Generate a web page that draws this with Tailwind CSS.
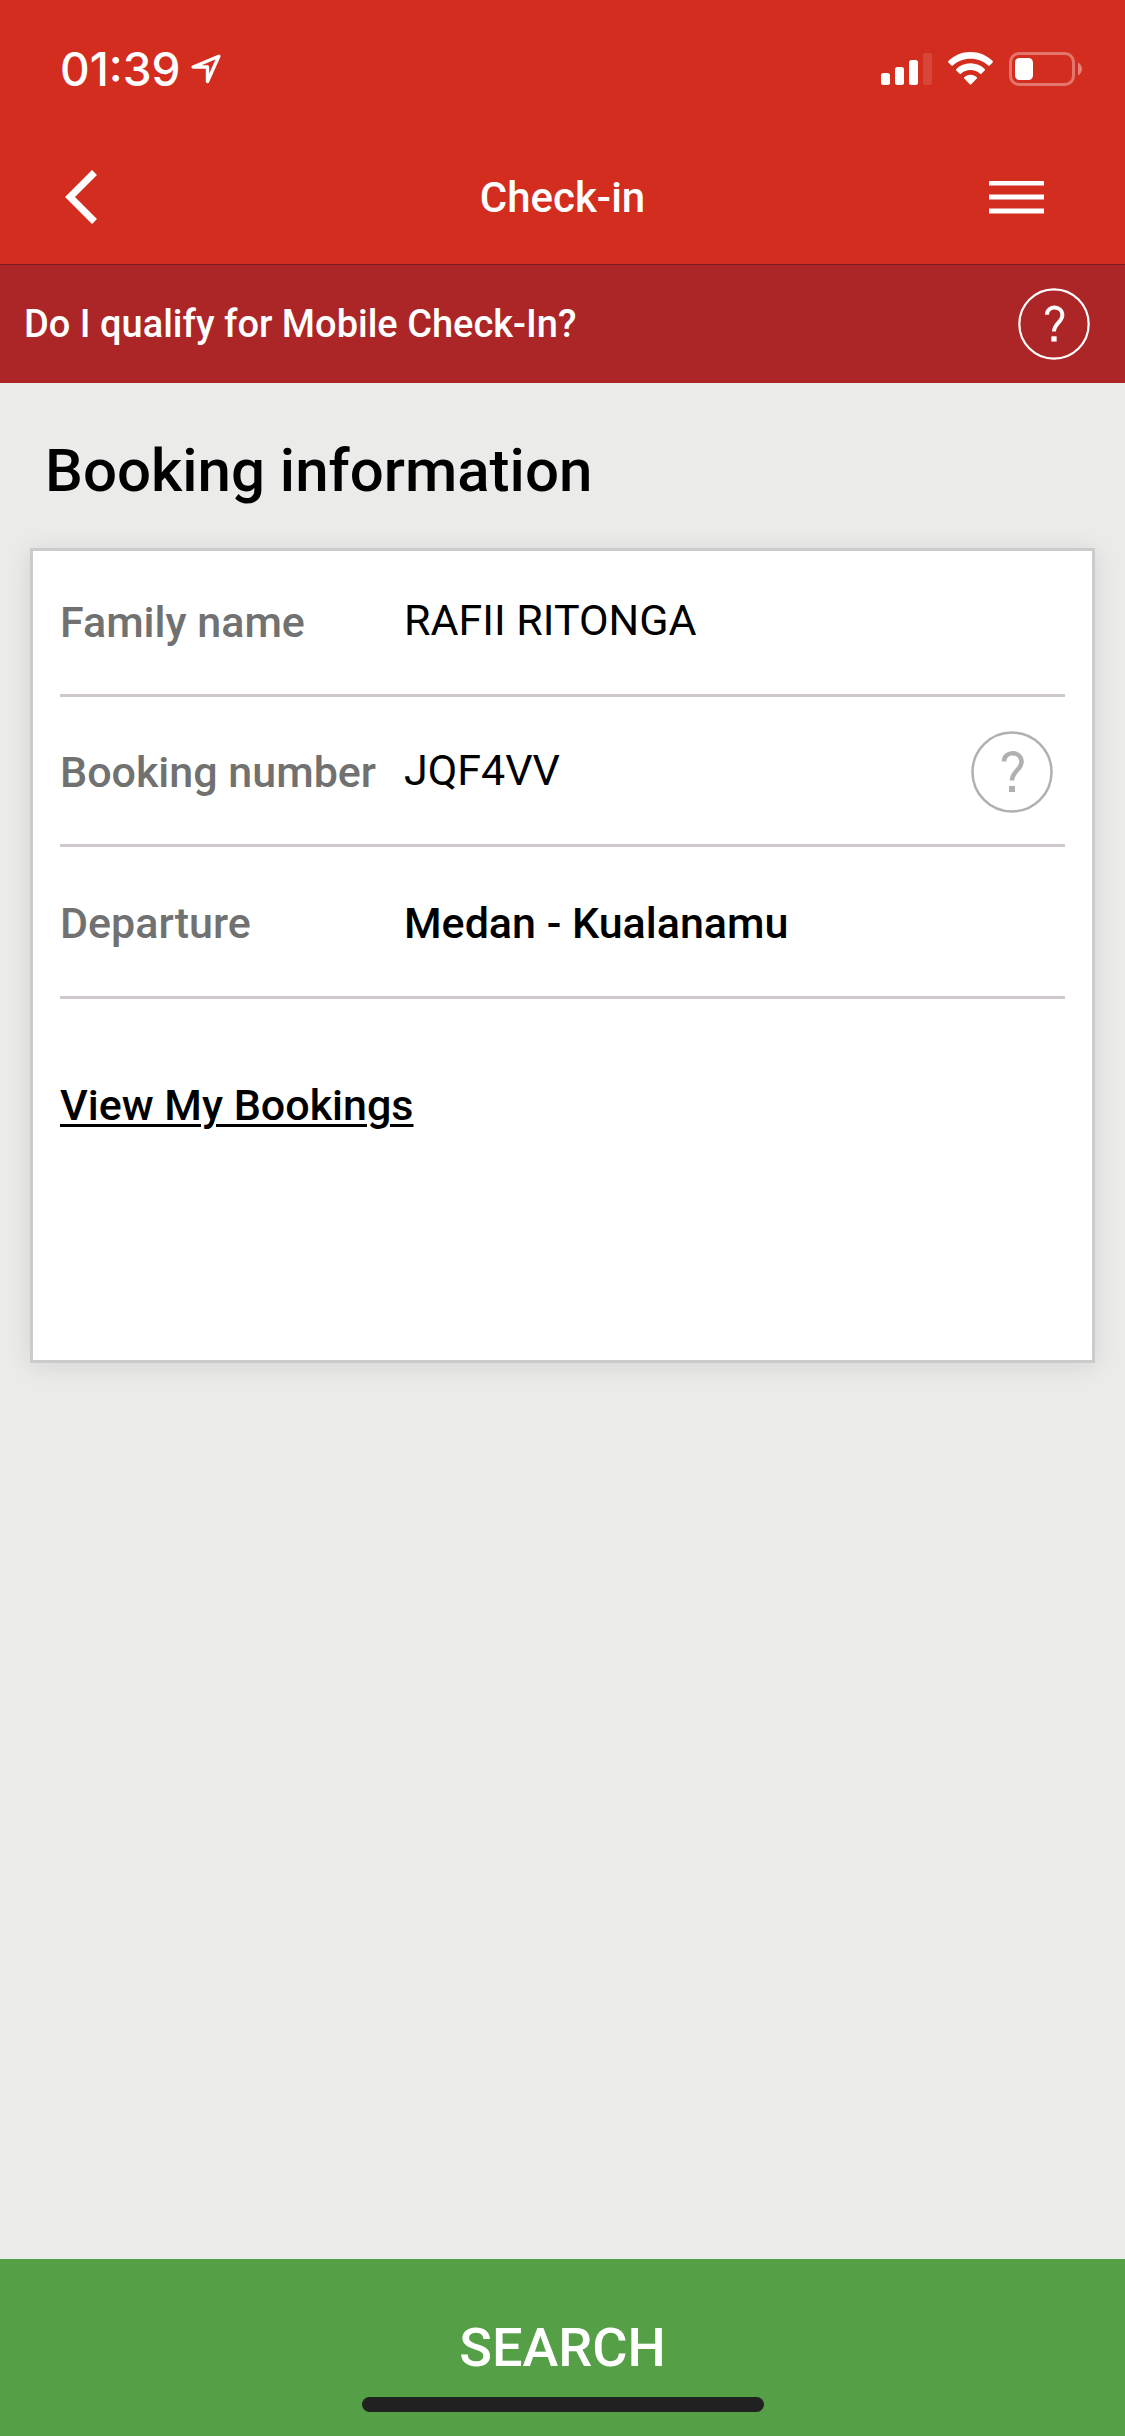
<!DOCTYPE html>
<html lang="en">
<head>
    <meta charset="UTF-8">
    <meta name="viewport" content="width=device-width, initial-scale=1.0">
    <title>Check-in</title>
    <script src="https://cdn.jsdelivr.net/npm/@tailwindcss/browser@4"></script>
</head>
<body class="min-h-screen flex flex-col bg-[#ebebe9] text-black font-['Roboto',sans-serif]">
    <header class="bg-[#d32d1f] text-white">
        <!-- Status bar -->
        <div class="h-[132px] pt-[6px] pl-[60px] pr-[42px] flex items-center justify-between">
            <div class="flex items-center gap-[10px]">
                <span class="font-['Inter',sans-serif] font-medium text-[46px] leading-none">01:39</span>
                <svg class="w-[30px] h-[30px]" viewBox="0 0 30 30" fill="none" stroke="currentColor" stroke-width="3.400" stroke-linejoin="round">
                    <path d="M27.800 2.300 L2.200 13 H16.500 V27.600 Z"/>
                </svg>
            </div>
            <div class="flex items-center gap-4">
                <svg class="w-[51px] h-[34px]" viewBox="0 0 51 34" fill="currentColor">
                    <rect x="0" y="21" width="9" height="12" rx="2.500"/>
                    <rect x="14" y="15" width="9" height="18" rx="2.500"/>
                    <rect x="28" y="8" width="9" height="25" rx="2.500"/>
                    <rect x="42" y="1" width="9" height="32" rx="2.500" opacity=".12"/>
                </svg>
                <svg class="w-[45px] h-[34px]" viewBox="0 0 45 34" fill="currentColor">
                    <path d="M22.500 0 C31 0 39 3.300 44.600 9 Q45.300 9.800 44.600 10.500 L41.600 13.500 Q40.900 14.200 40.200 13.500 C35.500 9.200 29.200 6.800 22.500 6.800 C15.800 6.800 9.500 9.200 4.800 13.500 Q4.100 14.200 3.400 13.500 L.4 10.500 Q-.3 9.800 .4 9 C6 3.300 14 0 22.500 0Z"/>
                    <path d="M22.500 11.200 C28 11.200 33 13.300 36.700 17 Q37.400 17.700 36.700 18.400 L33.400 21.700 Q32.700 22.400 32 21.700 C29.400 19.400 26.100 18.100 22.500 18.100 C18.900 18.100 15.600 19.400 13 21.700 Q12.300 22.400 11.600 21.700 L8.300 18.400 Q7.600 17.700 8.300 17 C12 13.300 17 11.200 22.500 11.200Z"/>
                    <path d="M22.500 22.800 C25 22.800 27.200 23.700 28.800 25.200 Q29.500 25.900 28.800 26.600 L23.200 32.300 Q22.500 33 21.800 32.300 L16.200 26.600 Q15.500 25.900 16.200 25.200 C17.800 23.700 20 22.800 22.500 22.800Z"/>
                </svg>
                <svg class="w-[74px] h-[34px]" viewBox="0 0 74 34" fill="currentColor">
                    <rect x="1.500" y="1.500" width="63" height="31" rx="8.500" fill="none" stroke="currentColor" stroke-width="3" opacity=".35"/>
                    <rect x="6" y="6" width="18" height="22" rx="4.500"/>
                    <path d="M69 10.500 C71.500 12 73 14.300 73 17 S71.500 22 69 23.500Z" opacity=".4"/>
                </svg>
            </div>
        </div>

        <nav class="h-[132px] px-[62px] grid grid-cols-[1fr_auto_1fr] items-center">
            <button type="button" aria-label="Back" class="justify-self-start">
                <svg class="block w-[40px] h-[56px]" viewBox="0 0 40 56" fill="none" stroke="currentColor" stroke-width="7">
                    <path d="M32.500 2.500 L8 27 L32.500 51.500"/>
                </svg>
            </button>
            <h1 class="text-[42px] leading-none font-medium">Check-in</h1>
            <button type="button" aria-label="Menu" class="justify-self-end pr-[19px]">
                <svg class="block w-[56px] h-[34px]" viewBox="0 0 56 34" stroke="currentColor" stroke-width="5">
                    <path d="M1 2 H56 M1 16 H56 M1 30 H56"/>
                </svg>
            </button>
        </nav>

        <div class="h-[119px] border-t border-[#7c191b] bg-[#ac2627] pl-6 pr-[35px] flex items-center justify-between">
            <p class="text-[38px] leading-none font-medium">Do I qualify for Mobile Check-In?</p>
            <button type="button" aria-label="Mobile check-in help">
                <svg class="block w-[72px] h-[72px]" viewBox="0 0 82 82" fill="none" stroke="currentColor" stroke-width="2.500">
                    <circle cx="41" cy="41" r="39.500"/>
                    <path d="M33 30.500 C33 19.500 50.500 19.500 50.500 31 C50.500 38.500 41 40.500 41 49.500" stroke-width="4.500"/>
                    <rect x="38" y="55" width="6" height="6" fill="currentColor" stroke="none"/>
                </svg>
            </button>
        </div>
    </header>

    <main class="px-[30px] pt-[53px] pb-10">
        <h2 class="pl-[15px] text-[60px] leading-[70px] font-medium">Booking information</h2>

        <form id="booking" class="mt-[42px] h-[815px] px-[27px] bg-white border-3 border-[#cbcbcb] shadow-[0_3px_24px_rgba(0,0,0,0.10)]">
            <div class="h-[146px] border-b-3 border-[#cfc8cf] pb-1 flex items-center text-[43px]">
                <label for="family-name" class="w-[344px] shrink-0 pt-1 font-medium text-[#717171]">Family name</label>
                <input id="family-name" type="text" value="RAFII RITONGA" class="flex-1 min-w-0 focus:outline-none">
            </div>
            <div class="h-[150px] border-b-3 border-[#cfc8cf] pr-3 flex items-center text-[43px]">
                <label for="booking-number" class="w-[344px] shrink-0 pt-1 font-medium text-[#717171]">Booking number</label>
                <input id="booking-number" type="text" value="JQF4VV" class="flex-1 min-w-0 focus:outline-none">
                <button type="button" aria-label="Booking number help" class="pt-[2px] text-[#b0b0b0]">
                    <svg class="block w-[82px] h-[82px]" viewBox="0 0 82 82" fill="none" stroke="currentColor" stroke-width="2.500">
                        <circle cx="41" cy="41" r="39.500"/>
                        <path d="M33 30.500 C33 19.500 50.500 19.500 50.500 31 C50.500 38.500 41 40.500 41 49.500" stroke-width="4.500"/>
                        <rect x="38" y="55" width="6" height="6" fill="currentColor" stroke="none"/>
                    </svg>
                </button>
            </div>
            <div class="h-[152px] border-b-3 border-[#cfc8cf] pt-1 flex items-center text-[43px]">
                <label for="departure" class="w-[344px] shrink-0 font-medium text-[#717171]">Departure</label>
                <input id="departure" type="text" value="Medan - Kualanamu" readonly class="flex-1 min-w-0 font-medium focus:outline-none">
            </div>
            <a href="#" class="inline-block mt-[74px] text-[43px] font-medium underline decoration-3 underline-offset-4">View My Bookings</a>
        </form>
    </main>

    <footer class="relative mt-auto">
        <button type="submit" form="booking" class="block w-full h-[177px] bg-[#559f47] text-white text-[54px] font-medium">SEARCH</button>
        <div class="absolute bottom-6 inset-x-0 mx-auto w-[402px] h-[15px] rounded-full bg-[#212121]"></div>
    </footer>
</body>
</html>
